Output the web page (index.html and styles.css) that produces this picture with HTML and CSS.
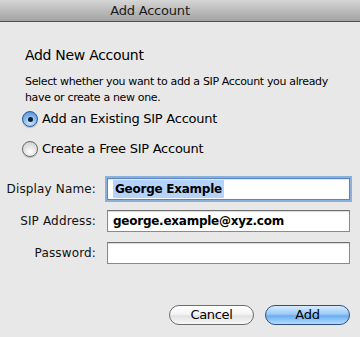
FILE: index.html
```html
<!DOCTYPE html>
<html>
<head>
<meta charset="utf-8">
<link rel="stylesheet" href="styles.css">
</head>
<body>
<div class="window">
  <div class="titlebar"><span class="title">Add Account</span></div>
  <div class="content">
    <div class="intro">
      <h1 class="heading">Add New Account</h1>
      <p class="desc">Select whether you want to add a SIP Account you already have or create a new one.</p>
      <div class="radios">
        <label class="radio"><span class="dot checked"></span><span>Add an Existing SIP Account</span></label>
        <label class="radio"><span class="dot"></span><span>Create a Free SIP Account</span></label>
      </div>
    </div>
    <div class="form">
      <span class="lbl">Display Name:</span>
      <div class="field focus"><span class="sel">George Example</span></div>
      <span class="lbl">SIP Address:</span>
      <div class="field">george.example@xyz.com</div>
      <span class="lbl">Password:</span>
      <div class="field"></div>
    </div>
    <div class="buttons">
      <button class="btn cancel">Cancel</button>
      <button class="btn add">Add</button>
    </div>
  </div>
</div>
</body>
</html>
```
FILE: styles.css
```css
html, body {
  margin: 0;
  padding: 0;
  background: #e8e8e8;
}
body {
  width: 360px;
  height: 337px;
  overflow: hidden;
  font-family: "DejaVu Sans", sans-serif;
  color: #000;
}
.window {
  display: flex;
  flex-direction: column;
  height: 337px;
}
.titlebar {
  height: 21px;
  border-bottom: 1px solid #505050;
  background: linear-gradient(#d6d6d6, #b6b6b6 60%, #a4a4a4);
  display: flex;
  align-items: center;
  justify-content: center;
  padding-right: 60px;
}
.title {
  font-size: 13px;
  color: #1a1a1a;
  letter-spacing: -0.2px;
}
.content {
  display: flex;
  flex-direction: column;
  flex: 1;
}
.intro {
  padding: 25px 0 0 25px;
}
.heading {
  margin: 0;
  font-size: 14px;
  font-weight: normal;
  line-height: 17px;
  letter-spacing: -0.3px;
}
.desc {
  margin: 10px 0 0 0;
  font-size: 11px;
  line-height: 16px;
  width: 320px;
  letter-spacing: -0.35px;
}
.radios {
  display: flex;
  flex-direction: column;
  gap: 12px;
  margin: 4px 0 0 -3px;
}
.radio {
  display: flex;
  align-items: center;
  gap: 4px;
  font-size: 13px;
  line-height: 18px;
  letter-spacing: -0.25px;
}
.dot {
  width: 14px;
  height: 14px;
  border-radius: 50%;
  border: 1px solid #6a6a6a;
  background: radial-gradient(circle at 50% 70%, #ffffff, #d8d8d8 70%, #b8b8b8);
  display: flex;
  align-items: center;
  justify-content: center;
  box-shadow: 0 1px 1px rgba(0,0,0,0.2);
}
.dot.checked {
  border-color: #2f5c94;
  background: radial-gradient(circle at 50% 75%, #cfe8ff, #7fb3ec 55%, #3f7fcc);
}
.dot.checked::after {
  content: "";
  width: 5px;
  height: 5px;
  border-radius: 50%;
  background: #0d1c33;
}
.form {
  display: grid;
  grid-template-columns: 96px 243px;
  column-gap: 11px;
  row-gap: 10px;
  align-items: center;
  margin-top: 20px;
}
.lbl {
  text-align: right;
  font-size: 12px;
  letter-spacing: 0.15px;
  color: #111;
}
.field {
  height: 20px;
  border: 1px solid #8a8a8a;
  border-top-color: #6f6f6f;
  background: #fff;
  font-size: 12px;
  font-weight: bold;
  line-height: 20px;
  padding-left: 5px;
  letter-spacing: -0.25px;
  box-shadow: inset 0 1px 1px rgba(0,0,0,0.15);
}
.field.focus {
  border-color: #5a86c0;
  box-shadow: 0 0 0 2px #8cb0dc, inset 0 1px 1px rgba(0,0,0,0.1);
}
.sel {
  display: inline-block;
  background: #b5d3fa;
  line-height: 18px;
  padding: 0 2px;
  margin-top: 1px;
  vertical-align: top;
}
.buttons {
  display: flex;
  justify-content: flex-end;
  gap: 11px;
  padding: 0 10px 0 0;
  margin-top: 41px;
}
.btn {
  width: 85px;
  height: 20px;
  border-radius: 10px;
  font-family: "DejaVu Sans", sans-serif;
  font-size: 13px;
  padding: 0;
  line-height: 18px;
  color: #000;
  letter-spacing: -0.3px;
}
.cancel {
  border: 1px solid #6d6d6d;
  background: linear-gradient(#ffffff, #f4f4f4 45%, #e2e2e2 55%, #f8f8f8);
}
.add {
  border: 1px solid #2c4f86;
  background: linear-gradient(#d6ebff, #9ccaf5 45%, #6aaef0 55%, #b4dcfc);
}
```
